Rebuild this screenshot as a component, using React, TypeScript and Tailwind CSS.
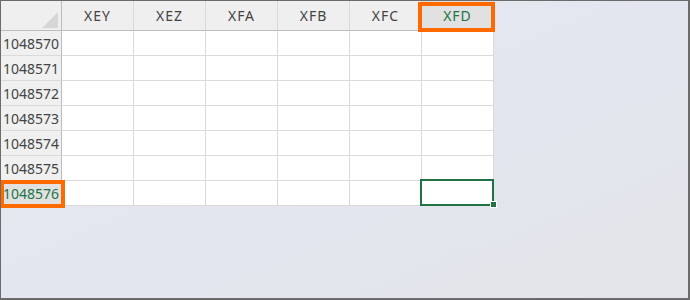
const columns = ["XEY", "XEZ", "XFA", "XFB", "XFC", "XFD"];
const rows = ["1048570", "1048571", "1048572", "1048573", "1048574", "1048575", "1048576"];

const font = { fontFamily: '"Noto Sans", "Noto Sans CJK JP", sans-serif' };

export default function App() {
  return (
    <main
      className="relative h-[300px] w-[690px] overflow-hidden border-t border-l border-r-2 border-b-2 border-[#6b6b6b] bg-gradient-to-br from-[#e8ecef] via-[#e3e6ef] to-[#e4e5ea] text-[14px] text-[#444]"
      style={font}
    >
      <div className="grid w-fit grid-cols-[61px_repeat(6,72px)] bg-white">
        {/* corner */}
        <div className="relative h-[30px] border-r border-b border-[#bcbcbc] bg-[#efefef]">
          <svg className="absolute left-[41px] top-[11px]" width="16" height="16" viewBox="0 0 16 16">
            <polygon points="16,0 16,16 0,16" fill="#d6d6d6" />
          </svg>
        </div>
        {columns.map((c, i) => (
          <div
            key={c}
            className={`flex h-[30px] items-center justify-center border-b border-[#bcbcbc] tracking-[1px] ${
              i === 5 ? "border-r border-r-[#d0d0d0] bg-[#e1e1e1] text-[#217346]" : "border-r border-r-[#dadada] bg-[#efefef]"
            }`}
          >
            {c}
          </div>
        ))}

        {rows.map((r, ri) => (
          <Row key={r} label={r} last={ri === rows.length - 1} />
        ))}
      </div>

      {/* annotation boxes */}
      <div className="absolute left-[417px] top-[1px] h-[30px] w-[77px] border-4 border-[#ff6a00]" />
      <div className="absolute left-[-1px] top-[179px] h-[28px] w-[65px] border-4 border-[#ff6a00]" />
    </main>
  );
}

function Row({ label, last }: { label: string; last: boolean }) {
  return (
    <>
      <div
        className={`flex h-[25px] items-center border-r border-b border-r-[#bcbcbc] border-b-[#dadada] pl-[2px] ${
          last ? "bg-[#e1e1e1] text-[#217346]" : "bg-[#f0f0f0]"
        }`}
      >
        {label}
      </div>
      {columns.map((c, i) => (
        <div key={c} className="relative h-[25px] border-r border-b border-[#dadada] bg-white">
          {last && i === 5 && (
            <>
              <div className="absolute left-[-2px] top-[-2px] h-[27px] w-[74px] border-2 border-[#217346]" />
              <div className="absolute left-[68px] top-[20px] h-[7px] w-[7px] border border-white bg-[#217346]" />
            </>
          )}
        </div>
      ))}
    </>
  );
}
